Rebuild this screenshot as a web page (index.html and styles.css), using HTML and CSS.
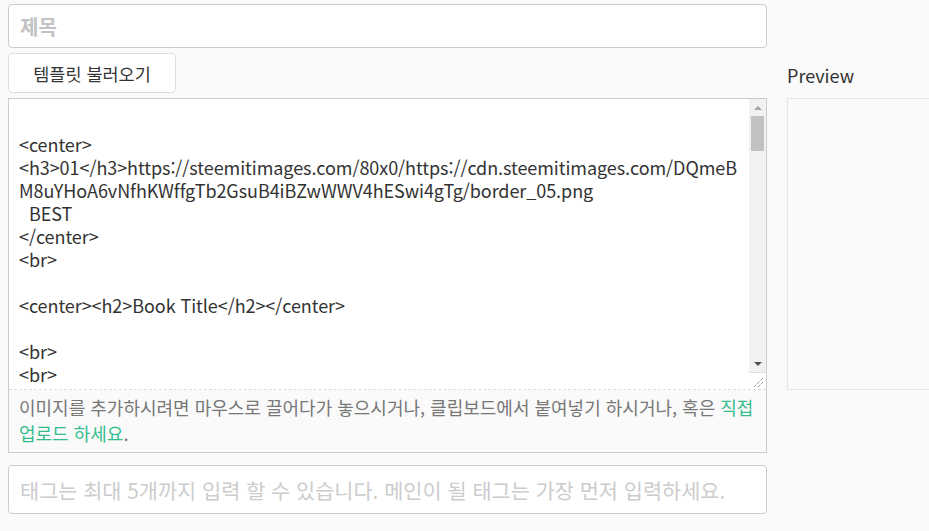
FILE: index.html
```html
<!DOCTYPE html>
<html lang="ko">
<head>
<meta charset="utf-8">
<title>Editor</title>
<link rel="stylesheet" href="styles.css">
</head>
<body>
<div class="page">
  <div class="field title-field"><span class="ph-title">제목</span></div>
  <div class="tpl-btn">템플릿 불러오기</div>
  <div class="preview-label">Preview</div>
  <div class="editor">
    <div class="ta">
      <div class="ta-text">
<span class="ln"></span>
<span class="ln">&lt;center&gt;</span>
<span class="ln">&lt;h3&gt;01&lt;/h3&gt;https://steemitimages.com/80x0/https://cdn.steemitimages.com/DQmeB</span>
<span class="ln">M8uYHoA6vNfhKWffgTb2GsuB4iBZwWWV4hESwi4gTg/border_05.png</span>
<span class="ln">  BEST</span>
<span class="ln">&lt;/center&gt;</span>
<span class="ln">&lt;br&gt;</span>
<span class="ln"></span>
<span class="ln">&lt;center&gt;&lt;h2&gt;Book Title&lt;/h2&gt;&lt;/center&gt;</span>
<span class="ln"></span>
<span class="ln">&lt;br&gt;</span>
<span class="ln">&lt;br&gt;</span>
      </div>
      <div class="sb">
        <div class="sb-up"><span class="tri-up"></span></div>
        <div class="sb-track"><div class="sb-thumb"></div></div>
        <div class="sb-down"><span class="tri-down"></span></div>
        <div class="resizer">
          <svg width="16" height="16" viewBox="0 0 16 16"><path d="M5 14 L14 5 M9 14 L14 9" stroke="#666" stroke-width="1" stroke-dasharray="1 1" fill="none"/></svg>
        </div>
      </div>
    </div>
    <div class="drop">이미지를 추가하시려면 마우스로 끌어다가 놓으시거나, 클립보드에서 붙여넣기 하시거나, 혹은 <span class="green">직접<br>업로드 하세요</span>.</div>
  </div>
  <div class="preview"></div>
  <div class="field tags-field"><span class="ph-tags">태그는 최대 5개까지 입력 할 수 있습니다. 메인이 될 태그는 가장 먼저 입력하세요.</span></div>
</div>
</body>
</html>
```

FILE: styles.css
```css
html, body {
  margin: 0;
  padding: 0;
  background: #fafafa;
  overflow: hidden;
}
body {
  font-family: "Noto Sans CJK KR", "Noto Sans", sans-serif;
  color: #333;
  width: 929px;
  height: 531px;
}
.page {
  display: grid;
  grid-template-columns: 759px 780px;
  column-gap: 20px;
  padding: 4px 8px 0 8px;
}
.field {
  box-sizing: border-box;
  background: #fff;
  border: 1px solid #ccc;
  border-radius: 4px;
  display: flex;
  align-items: center;
  padding: 0 11px;
}
.title-field {
  grid-column: 1;
  grid-row: 1;
  height: 44px;
}
.ph-title {
  font-size: 20px;
  font-weight: 700;
  color: #c2c2c2;
}
.tpl-btn {
  grid-column: 1;
  grid-row: 2;
  justify-self: start;
  margin-top: 5px;
  box-sizing: border-box;
  width: 168px;
  height: 40px;
  background: #fff;
  border: 1px solid #ddd;
  border-radius: 4px;
  display: flex;
  align-items: center;
  justify-content: center;
  font-size: 17.5px;
  color: #333;
}
.preview-label {
  grid-column: 2;
  grid-row: 2;
  align-self: end;
  font-size: 18px;
  line-height: 24px;
  color: #333;
  margin-bottom: 6px;
}
.editor {
  grid-column: 1;
  grid-row: 3;
  margin-top: 5px;
  border: 1px solid #ccc;
  background: #fafafa;
}
.ta {
  display: flex;
  height: 290px;
  background: #fff;
  border-bottom: 1px dashed #ddd;
}
.ta-text {
  flex: 1;
  padding: 11px 10px 0 10px;
  font-size: 18px;
  letter-spacing: -0.07px;
  line-height: 23px;
  color: #333;
  overflow: hidden;
}
.ln {
  display: block;
  height: 23px;
  white-space: pre;
}
.sb {
  width: 17px;
  display: flex;
  flex-direction: column;
  background: #f1f1f1;
}
.sb-up, .sb-down {
  height: 17px;
  display: flex;
  align-items: center;
  justify-content: center;
}
.tri-up {
  width: 0;
  height: 0;
  border-left: 4px solid transparent;
  border-right: 4px solid transparent;
  border-bottom: 4px solid #a3a3a3;
}
.tri-down {
  width: 0;
  height: 0;
  border-left: 4px solid transparent;
  border-right: 4px solid transparent;
  border-top: 4px solid #505050;
}
.sb-track {
  flex: 1;
  padding: 0 2px;
}
.sb-thumb {
  height: 35px;
  background: #c1c1c1;
}
.resizer {
  height: 16px;
  background: #fff;
  border-top: 1px solid #ddd;
  display: flex;
}
.drop {
  padding: 4px 10px 6px 10px;
  font-size: 18px;
  line-height: 26px;
  color: #777;
  white-space: nowrap;
}
.green {
  color: #33bd8c;
}
.preview {
  grid-column: 2;
  grid-row: 3;
  align-self: start;
  margin-top: 5px;
  box-sizing: border-box;
  height: 292px;
  border: 1px solid #e5e5e5;
  background: #fafafa;
}
.tags-field {
  grid-column: 1;
  grid-row: 4;
  margin-top: 12px;
  height: 49px;
}
.ph-tags {
  font-size: 20.8px;
  color: #ccc;
}
```
